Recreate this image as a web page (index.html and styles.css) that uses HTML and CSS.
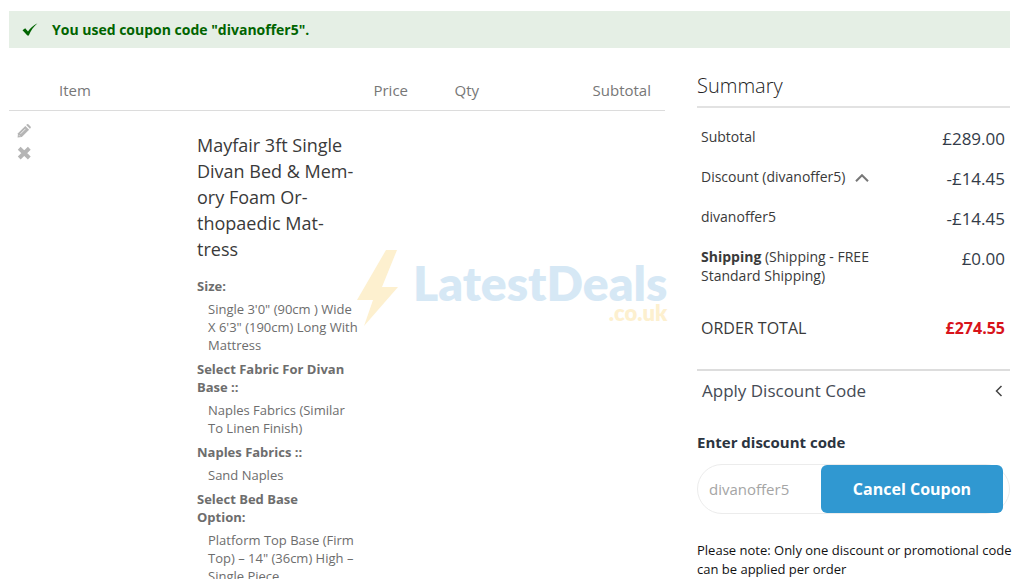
FILE: index.html
```html
<!DOCTYPE html>
<html lang="en">
<head>
    <meta charset="UTF-8">
    <meta name="viewport" content="width=device-width, initial-scale=1.0">
    <title>Shopping Cart</title>
    <link rel="stylesheet" href="styles.css">
</head>
<body>
    <div class="message" role="status">
        <svg class="message-icon" viewBox="0 0 16 13" aria-hidden="true"><path d="M.5 7.200 3.200 5.200 6 8.600C8.400 5 11 2.300 15.500 .2 11.500 3.600 8.800 7.500 6.800 12.600H5.400Z"/></svg>
        <span>You used coupon code "divanoffer5".</span>
    </div>

    <main class="cart">
        <table class="cart-items">
            <colgroup>
                <col class="col-actions">
                <col class="col-item">
                <col class="col-price">
                <col class="col-qty">
                <col>
            </colgroup>
            <thead>
                <tr>
                    <td></td>
                    <th scope="col">Item</th>
                    <th scope="col" class="right">Price</th>
                    <th scope="col" class="right">Qty</th>
                    <th scope="col" class="right last">Subtotal</th>
                </tr>
            </thead>
            <tbody>
                <tr>
                    <td>
                        <div class="actions">
                            <a href="#" aria-label="Edit item">
                                <svg viewBox="0 0 14 14"><path d="M1 9.200 8.300 1.900 12.100 5.700 4.800 13 .6 13.400Z"/><path d="M9.200 1 10 .3Q10.800-.2 11.600.5L13.500 2.400Q14.200 3.200 13.600 4L12.900 4.800Z"/><path class="cut" d="M3.500 9.800 8.500 4.800M2 11.300l1 1"/></svg>
                            </a>
                            <a href="#" aria-label="Remove item">
                                <svg viewBox="0 0 14 14"><path class="cross" d="M2.200 2.200 12.300 12M12.300 2.200 2.200 12"/></svg>
                            </a>
                        </div>
                    </td>
                    <td>
                        <div class="product">
                            <h2>Mayfair 3ft Single Divan Bed &amp; Mem&shy;ory Foam Or&shy;thopaedic Mat&shy;tress</h2>
                            <dl>
                                <dt>Size:</dt>
                                <dd>Single 3'0" (90cm ) Wide X 6'3" (190cm) Long With Mattress</dd>
                                <dt>Select Fabric For Divan Base ::</dt>
                                <dd>Naples Fabrics (Similar To Linen Finish)</dd>
                                <dt>Naples Fabrics ::</dt>
                                <dd>Sand Naples</dd>
                                <dt>Select Bed Base Option:</dt>
                                <dd>Platform Top Base (Firm Top) – 14" (36cm) High – Single Piece</dd>
                            </dl>
                        </div>
                    </td>
                    <td></td>
                    <td></td>
                    <td></td>
                </tr>
            </tbody>
        </table>

        <aside class="summary">
            <h1>Summary</h1>
            <table class="totals">
                <tbody>
                    <tr>
                        <th scope="row">Subtotal</th>
                        <td>£289.00</td>
                    </tr>
                    <tr>
                        <th scope="row">Discount (divanoffer5)
                            <svg class="caret" viewBox="0 0 14 8" aria-hidden="true"><path d="M1 7.300 7 1.200 13 7.300"/></svg>
                        </th>
                        <td>-£14.45</td>
                    </tr>
                    <tr>
                        <th scope="row">divanoffer5</th>
                        <td>-£14.45</td>
                    </tr>
                    <tr>
                        <th scope="row"><strong>Shipping</strong> (Shipping - FREE Standard Shipping)</th>
                        <td>£0.00</td>
                    </tr>
                    <tr class="grand">
                        <th scope="row">ORDER TOTAL</th>
                        <td>£274.55</td>
                    </tr>
                </tbody>
            </table>

            <button type="button" class="discount-toggle">
                <span>Apply Discount Code</span>
                <svg viewBox="0 0 8 12" aria-hidden="true"><path d="M6.500 1 1.500 6 6.500 11"/></svg>
            </button>
            <form>
                <label for="coupon">Enter discount code</label>
                <div class="coupon-field">
                    <input type="text" id="coupon" value="divanoffer5">
                    <button type="button">Cancel Coupon</button>
                </div>
            </form>
            <p class="note">Please note: Only one discount or promotional code can be applied per order</p>
        </aside>
    </main>

    <div class="watermark">
        <svg viewBox="0 0 42 76" aria-hidden="true"><path d="M29 0H40L25 37H41L7 76 16 50H0Z"/></svg>
        <div class="watermark-name">
            <span>LatestDeals</span>
            <small>.co.uk</small>
        </div>
    </div>
</body>
</html>
```
FILE: styles.css
```css
* { box-sizing: border-box; }
body { margin: 0; padding: 11px 14px 0 9px; height: 100vh; overflow: hidden; background: #fff; color: #3a3a3a; font-family: "Open Sans", "Noto Sans", sans-serif; font-size: 14px; }
h1, h2, p, dl, dd { margin: 0; font-weight: 400; }
table { width: 100%; border-collapse: collapse; table-layout: fixed; }
th, td { padding: 0; font-weight: 400; text-align: left; vertical-align: top; }
button, input { font-family: inherit; }

.message { display: flex; align-items: center; gap: 14px; height: 37px; padding: 0 13px; background: #e5efe5; color: #006400; font-weight: 700; }
.message-icon { width: 16px; height: 13px; fill: #006400; }

.cart { display: grid; grid-template-columns: minmax(0, 656fr) minmax(0, 313fr); gap: 32px; align-items: start; }

/* items */
.cart-items { margin-top: 31px; }
.cart-items .col-actions { width: 50px; }
.cart-items .col-item { width: 300px; }
.cart-items .col-price { width: 49px; }
.cart-items .col-qty { width: 71px; }
.cart-items thead tr { border-bottom: 1px solid #dcdcdc; }
.cart-items th { height: 31px; line-height: 22px; color: #777; font-size: 15px; }
.cart-items .right { text-align: right; }
.cart-items .last { padding-right: 14px; }
.actions { display: flex; flex-direction: column; gap: 8px; padding: 13px 8px; }
.actions a { display: block; height: 14px; }
.actions svg { display: block; width: 14px; height: 14px; fill: #b5b5b5; }
.actions .cut { fill: none; stroke: #eee; }
.actions .cross { stroke: #b5b5b5; stroke-width: 4; }
.product { padding: 21px 0 0 138px; color: #6d6d6d; font-size: 13px; line-height: 18px; }
.product h2 { margin-bottom: 15px; padding-right: 4px; color: #3a3a3a; font-size: 18px; line-height: 26px; }
.product dt { margin-bottom: 5px; padding-right: 12px; font-weight: 700; }
.product dd { margin: 0 0 6px 11px; }

/* summary */
.summary { margin-top: 25px; }
.summary h1 { height: 35px; border-bottom: 2px solid #e2e2e2; font-size: 20px; font-weight: 300; line-height: 26px; color: #222; }
.totals { margin: 18px 0 30px; }
.totals th { width: 60%; padding: 1px 4px 20px; line-height: 19px; }
.totals td { padding: 0 5px 0 0; color: #333b48; font-size: 17px; line-height: 25px; text-align: right; }
.totals .caret { width: 14px; height: 8px; margin-left: 6px; fill: none; stroke: #777; stroke-width: 2; }
.totals .grand th, .totals .grand td { padding-top: 12px; padding-bottom: 0; font-size: 16px; line-height: 22px; }
.totals .grand td { color: #d8131b; font-weight: 700; }

.discount-toggle { display: flex; justify-content: space-between; align-items: center; width: 100%; padding: 8px 7px 8px 5px; border: 0; border-top: 2px solid #ddd; background: none; color: #454b55; font-size: 17px; line-height: 24px; }
.discount-toggle svg { width: 8px; height: 12px; fill: none; stroke: #444; stroke-width: 1.5; }
.summary label { display: block; margin-top: 20px; color: #2b3440; font-size: 15px; font-weight: 700; line-height: 22px; }
.coupon-field { display: flex; height: 50px; margin-top: 11px; padding-right: 6px; border: 1px solid #ececec; border-radius: 25px; }
.coupon-field input { flex: 1; min-width: 0; padding: 0 11px; border: 0; outline: 0; background: none; color: #a5a5a5; font-size: 15px; }
.coupon-field button { flex: 0 0 182px; border: 0; border-radius: 6px; background: #3098d1; color: #fff; font-size: 16px; font-weight: 700; }
.note { margin: 27px -10px 0 0; color: #111; font-size: 13px; line-height: 19px; }

/* watermark */
.watermark { position: absolute; top: 250px; left: 357px; display: flex; gap: 14px; pointer-events: none; }
.watermark svg { width: 42px; height: 76px; fill: #fdf0cf; }
.watermark-name { display: flex; flex-direction: column; align-items: flex-end; padding-top: 13px; color: #d6e8f5; font-family: Lato, sans-serif; font-weight: 800; font-size: 48px; line-height: 40px; }
.watermark-name small { color: #fdf0cf; font-size: 22px; line-height: 20px; }
```
